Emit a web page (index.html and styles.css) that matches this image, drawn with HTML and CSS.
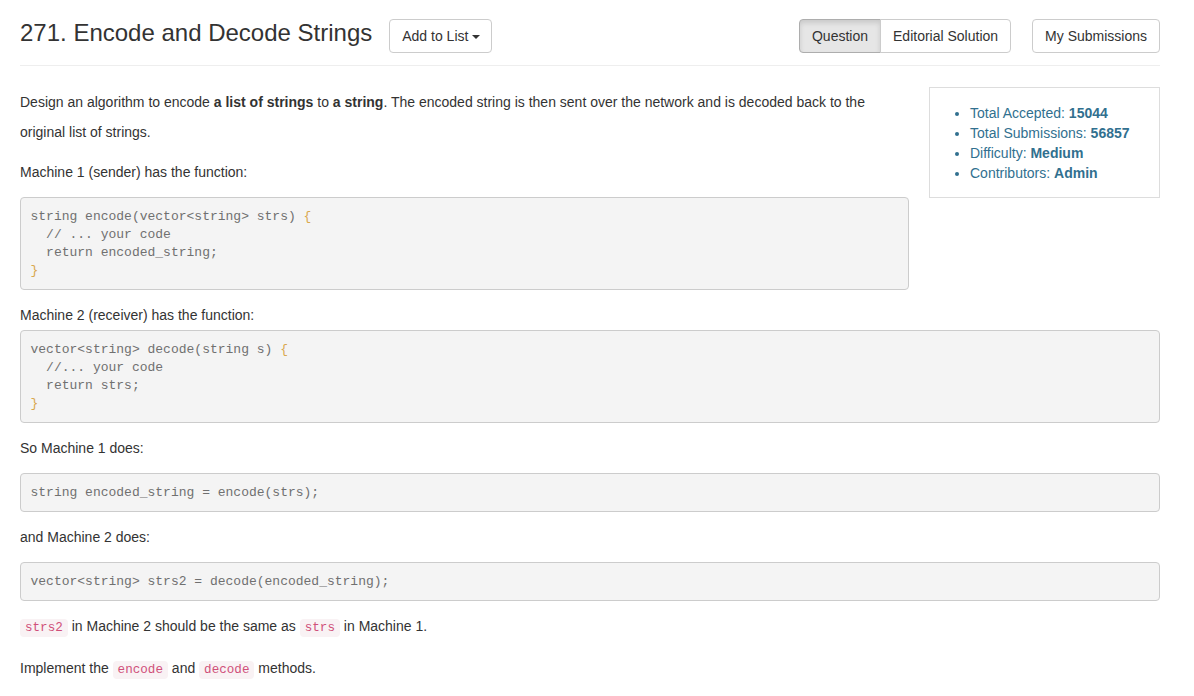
FILE: index.html
```html
<!DOCTYPE html>
<html>
<head>
<meta charset="utf-8">
<link rel="stylesheet" href="styles.css">
</head>
<body>
<div class="container">
  <div class="header">
    <h3 class="title">271. Encode and Decode Strings</h3>
    <button class="btn add-btn">Add to List <span class="caret"></span></button>
    <div class="spacer"></div>
    <div class="btn-group">
      <button class="btn active">Question</button>
      <button class="btn">Editorial Solution</button>
    </div>
    <button class="btn subs">My Submissions</button>
  </div>
  <hr class="rule">
  <div class="content">
    <div class="stats">
      <ul>
        <li>Total Accepted: <b>15044</b></li>
        <li>Total Submissions: <b>56857</b></li>
        <li>Difficulty: <b>Medium</b></li>
        <li>Contributors: <b>Admin</b></li>
      </ul>
    </div>
    <p>Design an algorithm to encode <b>a list of strings</b> to <b>a string</b>. The encoded string is then sent over the network and is decoded back to the original list of strings.</p>
    <p>Machine 1 (sender) has the function:</p>
<pre>string encode(vector&lt;string&gt; strs) <span class="br">{</span>
  // ... your code
  return encoded_string;
<span class="br">}</span></pre>
    <p class="tight">Machine 2 (receiver) has the function:</p>
<pre>vector&lt;string&gt; decode(string s) <span class="br">{</span>
  //... your code
  return strs;
<span class="br">}</span></pre>
    <p>So Machine 1 does:</p>
<pre>string encoded_string = encode(strs);</pre>
    <p>and Machine 2 does:</p>
<pre>vector&lt;string&gt; strs2 = decode(encoded_string);</pre>
    <p><code>strs2</code> in Machine 2 should be the same as <code>strs</code> in Machine 1.</p>
    <p>Implement the <code>encode</code> and <code>decode</code> methods.</p>
  </div>
</div>
</body>
</html>
```

FILE: styles.css
```css
* { box-sizing: border-box; }
html, body { margin: 0; padding: 0; background: #fff; }
body {
  font-family: "Liberation Sans", Arial, Helvetica, sans-serif;
  font-size: 14px;
  color: #333;
  line-height: 1.42857;
}
.container {
  width: 1140px;
  margin-left: 20px;
}
.header {
  display: flex;
  align-items: flex-start;
  padding-top: 19px;
}
.title {
  margin: 1px 0 0 0;
  font-size: 24px;
  font-weight: 400;
  line-height: 26px;
  color: #333;
}
.btn {
  font-family: "Liberation Sans", Arial, sans-serif;
  font-size: 14px;
  line-height: 20px;
  height: 34px;
  padding: 6px 12px;
  color: #333;
  background: #fff;
  border: 1px solid #ccc;
  border-radius: 4px;
  cursor: pointer;
  white-space: nowrap;
}
.add-btn { margin-left: 17px; padding-right: 11px; }
.caret {
  display: inline-block;
  width: 0;
  height: 0;
  vertical-align: middle;
  border-top: 4px solid #333;
  border-left: 4px solid transparent;
  border-right: 4px solid transparent;
}
.spacer { flex: 1; }
.btn-group { display: flex; }
.btn-group .btn:first-child { border-radius: 4px 0 0 4px; }
.btn-group .btn:last-child { border-radius: 0 4px 4px 0; margin-left: -1px; }
.btn.active {
  background: #e6e6e6;
  border-color: #adadad;
  box-shadow: inset 0 3px 5px rgba(0,0,0,0.125);
}
.subs { margin-left: 21px; }
.rule {
  margin: 12px 0 0 0;
  border: 0;
  border-top: 1px solid #eee;
}
.content { padding-top: 21px; }
.content p {
  margin: 0 0 10px 0;
  line-height: 30px;
}
.content p.tight { margin-bottom: 0; }
.stats {
  float: right;
  width: 231px;
  margin-left: 20px;
  border: 1px solid #ddd;
  padding: 5px 0 4px 0;
}
.stats ul {
  margin: 10px 0;
  padding-left: 40px;
  color: #31708f;
  line-height: 20px;
}
.stats b { font-weight: 700; }
pre {
  overflow: auto;
  margin: 0 0 10px 0;
  padding: 9.5px;
  font-family: "Liberation Mono", "Courier New", monospace;
  font-size: 13px;
  line-height: 18px;
  color: #707070;
  background: #f4f4f4;
  border: 1px solid #ccc;
  border-radius: 4px;
}
pre .br { color: #d9a84e; }
code {
  font-family: "Liberation Mono", "Courier New", monospace;
  font-size: 90%;
  padding: 2px 5px;
  color: #d0507a;
  background: #f9f2f4;
  border-radius: 4px;
}
```
